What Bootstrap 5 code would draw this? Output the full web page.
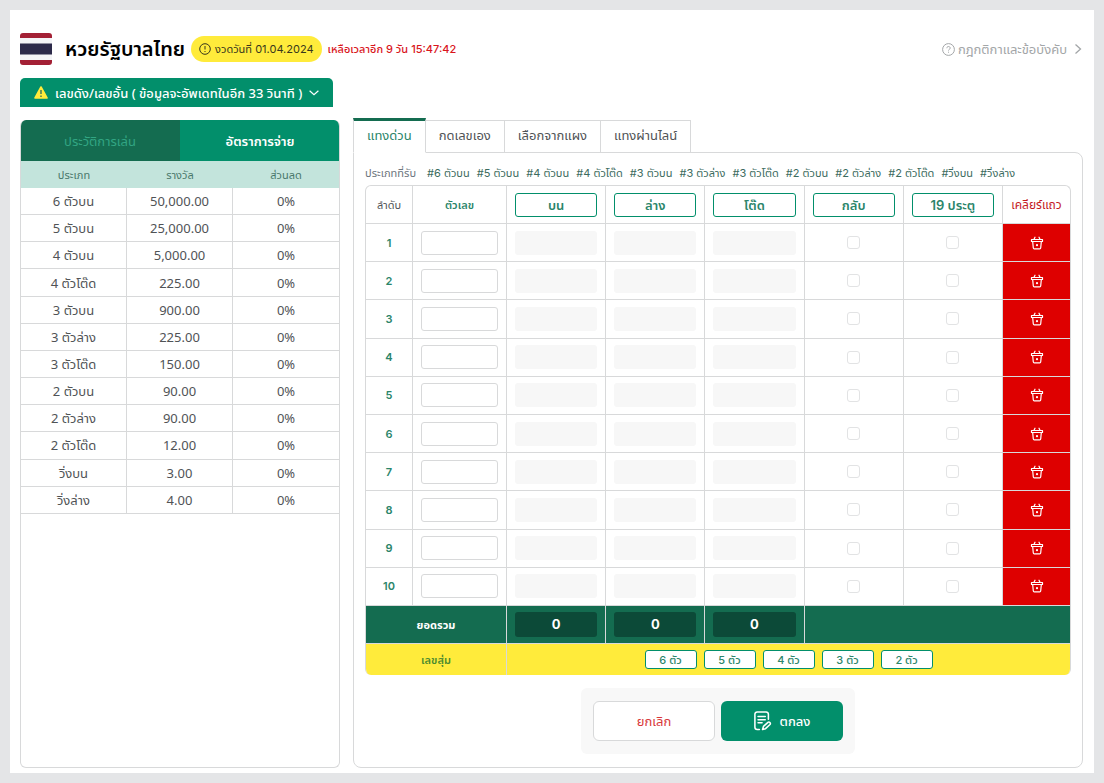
<!DOCTYPE html>
<html lang="th">
<head>
<meta charset="utf-8">
<meta name="viewport" content="width=device-width, initial-scale=1">
<title>หวยรัฐบาลไทย</title>
<link href="https://cdn.jsdelivr.net/npm/bootstrap@5.3.0/dist/css/bootstrap.min.css" rel="stylesheet">
<style>
:root{--green:#028f6b;--deep:#146c50;--text-green:#2b856a;--line:#d8d9da;--yellow:#ffeb3b;--red:#de0000}
body{padding:10px;background:#e4e5e7;font-family:Inter,"Noto Sans Thai","Noto Sans",sans-serif;font-size:13px;line-height:16px;color:#505356}
button,input{font-family:inherit}
button{padding:0;background:none;border:0;color:inherit}
.sheet{min-height:calc(100vh - 20px);padding:23px 12px 5px 10px}
.flag{border-radius:3px}
.page-title{font-size:20px;line-height:30px;font-weight:600;color:#000;margin:0 6px 0 13px}
.round-pill{background:var(--yellow);height:26px;border-radius:13px;padding:0 8px;font-size:11px;color:#38371c;gap:4px}
.time-left{color:#d9161c;font-size:11px;font-weight:500;margin-left:6px}
.rules-link{color:#a3a6a8;gap:3px}
.hot-numbers{background:var(--green);color:#fff;height:29px;border-radius:5px 5px 0 0;padding:0 14px;gap:7px;margin:13px 0 11px;font-family:"Noto Sans","Noto Sans Thai",sans-serif;font-weight:500}
.left-pane{flex:0 0 320px;margin-top:2px;border:1px solid var(--line);border-top:0;border-radius:6px;overflow:hidden}
.right-pane{margin:0 -1px 0 13px}
.left-tabs{margin:0 -1px}
.left-tabs button{flex:1;height:41px;background:var(--deep);color:#32a583}
.left-tabs button.active{background:var(--green);color:#fff;font-weight:600}
.grid-table{width:100%;border-collapse:separate;border-spacing:0;table-layout:fixed;text-align:center}
.grid-table th,.grid-table td{padding:0;border-right:1px solid var(--line);border-bottom:1px solid var(--line);vertical-align:middle}
.grid-table tr>:last-child{border-right:0}
.rates{height:353px;font-family:"Noto Sans","Noto Sans Thai",sans-serif}
.rates tr{height:27px}
.rates th{background:#c3e4dc;border:0;font-size:11px;font-weight:400;color:#49786b}
.bet-tabs{position:relative;align-items:flex-end}
.bet-tabs button{height:33px;padding:0 13px 3px;border:1px solid var(--line);border-left:0;background:#fff}
.bet-tabs button.active{height:35px;border-left:1px solid var(--line);border-top:3px solid var(--deep);border-bottom-color:#fff;color:var(--text-green)}
.bet-pane{border:1px solid var(--line);border-radius:0 8px 8px 8px;padding:12px 11px;margin-top:-1px}
.accepted{gap:7px;font-size:11px;color:#3c6b5e;margin-bottom:4px}
.bet-wrap{border:1px solid var(--line);border-bottom:0;border-radius:6px;overflow:hidden}
.bets{height:489px}
.bets tr{height:38px}
.bets td,.bets th{padding:0 8px}
.bets thead th{font-weight:400;font-size:11px}
.bets thead .col-number{color:var(--text-green);font-weight:600}
.bets thead .col-clear{color:#c41a1e;font-size:12px}
.bets tbody th{color:var(--text-green);font-weight:600;font-size:11px}
.bets thead button{display:block;width:100%;height:24px;border:1px solid var(--green);border-radius:3px;color:var(--text-green);font-size:13px;font-weight:600}
.bets .no-pad{padding:0}
.num,.amount{display:block;width:100%;height:24px;border:1px solid var(--line);border-radius:3px;padding:0 6px;background:#fff}
.amount{border:0;background:#f7f7f7}
.bets .form-check-input{display:block;width:13px;height:13px;margin:0 auto;border-color:#e2e3e4;border-radius:3px}
.bets tbody td:last-child{background:var(--red);padding:0}
.clear-row{display:flex;width:100%;height:37px;align-items:center;justify-content:center;color:#fff}
.bets .sum-row th,.bets .sum-row td{background:var(--deep);color:#fff;font-size:11px;font-weight:700}
.sum-row output{display:block;height:25px;line-height:25px;border-radius:3px;background:#0c4a38;font-size:13px}
.bets .random-row{height:31px}
.bets .random-row th,.bets .random-row td{background:var(--yellow);border-bottom:0;color:#4b8a2f;font-size:11px;font-weight:600}
.random-buttons{gap:7px}
.random-row button{width:52px;height:19px;border:1px solid var(--green);border-radius:3px;background:#fff;color:var(--text-green);font-size:11px;font-weight:500;line-height:16px}
.actions{background:#f8f8f8;border-radius:6px;padding:13px 12px;gap:6px;margin:13px auto 0}
.actions button{width:122px;height:40px;border-radius:6px;background:#fff;border:1px solid var(--line);color:#d8383a}
.actions .confirm{background:var(--green);border:0;color:#fff;font-weight:500;gap:8px}
</style>
</head>
<body>
<svg class="d-none" aria-hidden="true">
  <symbol id="basket" viewBox="0 0 14 14"><path d="M1.500 3.500h11v2h-11zM2.700 5.700l.6 6.300c.1.500.4.800.9.800h5.600c.5 0 .8-.3.900-.8l.6-6.300M5 1.200 4 3.200M9 1.200l1 2" fill="none" stroke="currentColor" stroke-width="1.200" stroke-linecap="round" stroke-linejoin="round"/><circle cx="7" cy="9.200" r="1.100" fill="currentColor"/></symbol>
</svg>
<main class="sheet bg-white d-flex flex-column">
  <header class="d-flex align-items-center">
    <svg class="flag" width="32" height="32" viewBox="0 0 32 32"><path fill="#a32035" d="M0 0h32v32H0z"/><path fill="#f4f4f7" d="M0 5h32v22H0z"/><path fill="#2d2a4a" d="M0 10.500h32v11H0z"/></svg>
    <h1 class="page-title">หวยรัฐบาลไทย</h1>
    <div class="round-pill d-flex align-items-center"><svg width="12" height="12" viewBox="0 0 12 12" fill="none" stroke="currentColor"><circle cx="6" cy="6" r="5.300"/><path d="M6 3v3.500M6 8v1"/></svg>งวดวันที่ 01.04.2024</div>
    <div class="time-left">เหลือเวลาอีก 9 วัน 15:47:42</div>
    <a href="#" class="rules-link ms-auto d-flex align-items-center text-decoration-none"><svg width="13" height="13" viewBox="0 0 13 13" fill="none" stroke="currentColor"><circle cx="6.500" cy="6.500" r="5.900"/><path d="M4.800 5.200c0-2.300 3.500-2.200 3.400 0 0 1.100-1.700 1.200-1.700 2.300M6.500 8.700v1"/></svg>กฎกติกาและข้อบังคับ<svg class="ms-1" width="8" height="12" viewBox="0 0 8 12" fill="none" stroke="currentColor" stroke-width="1.300"><path d="m1.500 1.500 5 4.500-5 4.500"/></svg></a>
  </header>
  <button type="button" class="hot-numbers d-flex align-items-center align-self-start"><svg width="14" height="13" viewBox="0 0 14 13"><path d="M7 1 13 12H1z" fill="#ffeb3b" stroke="#ffeb3b" stroke-width="1.600" stroke-linejoin="round"/><path d="M7 4v4M7 9.500V11" stroke="#39765c" stroke-width="1.400"/></svg>เลขดัง/เลขอั้น ( ข้อมูลจะอัพเดทในอีก 33 วินาที )<svg width="10" height="6" viewBox="0 0 10 6" fill="none" stroke="currentColor" stroke-width="1.200"><path d="m.6.8 4.400 4L9.400.8"/></svg></button>
  <div class="d-flex flex-grow-1">
    <aside class="left-pane">
      <div class="left-tabs d-flex"><button type="button">ประวัติการเล่น</button><button type="button" class="active">อัตราการจ่าย</button></div>
      <table class="grid-table rates">
        <thead><tr><th scope="col">ประเภท</th><th scope="col">รางวัล</th><th scope="col">ส่วนลด</th></tr></thead>
        <tbody>
          <tr><td>6 ตัวบน</td><td>50,000.00</td><td>0%</td></tr>
          <tr><td>5 ตัวบน</td><td>25,000.00</td><td>0%</td></tr>
          <tr><td>4 ตัวบน</td><td>5,000.00</td><td>0%</td></tr>
          <tr><td>4 ตัวโต๊ด</td><td>225.00</td><td>0%</td></tr>
          <tr><td>3 ตัวบน</td><td>900.00</td><td>0%</td></tr>
          <tr><td>3 ตัวล่าง</td><td>225.00</td><td>0%</td></tr>
          <tr><td>3 ตัวโต๊ด</td><td>150.00</td><td>0%</td></tr>
          <tr><td>2 ตัวบน</td><td>90.00</td><td>0%</td></tr>
          <tr><td>2 ตัวล่าง</td><td>90.00</td><td>0%</td></tr>
          <tr><td>2 ตัวโต๊ด</td><td>12.00</td><td>0%</td></tr>
          <tr><td>วิ่งบน</td><td>3.00</td><td>0%</td></tr>
          <tr><td>วิ่งล่าง</td><td>4.00</td><td>0%</td></tr>
        </tbody>
      </table>
    </aside>
    <section class="right-pane flex-grow-1 d-flex flex-column">
      <div class="bet-tabs d-flex"><button type="button" class="active">แทงด่วน</button><button type="button">กดเลขเอง</button><button type="button">เลือกจากแผง</button><button type="button">แทงผ่านไลน์</button></div>
      <div class="bet-pane flex-grow-1 d-flex flex-column">
        <div class="accepted d-flex"><span class="text-secondary me-1">ประเภทที่รับ</span><span>#6 ตัวบน</span><span>#5 ตัวบน</span><span>#4 ตัวบน</span><span>#4 ตัวโต๊ด</span><span>#3 ตัวบน</span><span>#3 ตัวล่าง</span><span>#3 ตัวโต๊ด</span><span>#2 ตัวบน</span><span>#2 ตัวล่าง</span><span>#2 ตัวโต๊ด</span><span>#วิ่งบน</span><span>#วิ่งล่าง</span></div>
        <div class="bet-wrap">
          <table class="grid-table bets">
            <colgroup><col style="width:47px"><col style="width:94px"><col><col><col><col><col><col style="width:67px"></colgroup>
            <thead><tr><th scope="col" class="no-pad">ลำดับ</th><th scope="col" class="col-number">ตัวเลข</th><th scope="col"><button type="button">บน</button></th><th scope="col"><button type="button">ล่าง</button></th><th scope="col"><button type="button">โต๊ด</button></th><th scope="col"><button type="button">กลับ</button></th><th scope="col"><button type="button">19 ประตู</button></th><th scope="col" class="no-pad col-clear">เคลียร์แถว</th></tr></thead>
            <tbody id="bet-rows"></tbody>
            <tfoot>
              <tr class="sum-row"><th scope="row" colspan="2">ยอดรวม</th><td><output>0</output></td><td><output>0</output></td><td><output>0</output></td><td colspan="3"></td></tr>
              <tr class="random-row"><th scope="row" colspan="2">เลขสุ่ม</th><td colspan="6"><div class="random-buttons d-flex justify-content-center"><button type="button">6 ตัว</button><button type="button">5 ตัว</button><button type="button">4 ตัว</button><button type="button">3 ตัว</button><button type="button">2 ตัว</button></div></td></tr>
            </tfoot>
          </table>
        </div>
        <div class="actions d-flex"><button type="button">ยกเลิก</button><button type="button" class="confirm d-flex align-items-center justify-content-center"><svg width="18" height="20" viewBox="0 0 20 22" fill="none" stroke="currentColor" stroke-width="1.700" stroke-linecap="round" stroke-linejoin="round"><path d="M16 9V3.500A2.500 2.500 0 0 0 13.500 1h-10A2.500 2.500 0 0 0 1 3.500V18a2.500 2.500 0 0 0 2.500 2.500H6M4.500 6h8M4.500 9.500h8M4.500 13H9M9.500 20.500l1-3.500 5-4.500c1.500-1 3.500.8 2.300 2.400l-5 4.600z"/></svg>ตกลง</button></div>
      </div>
    </section>
  </div>
</main>
<template id="bet-row"><tr><th scope="row"></th><td><input type="text" class="num"></td><td><input type="text" class="amount" disabled aria-label="บน"></td><td><input type="text" class="amount" disabled aria-label="ล่าง"></td><td><input type="text" class="amount" disabled aria-label="โต๊ด"></td><td><input type="checkbox" class="form-check-input" aria-label="กลับ"></td><td><input type="checkbox" class="form-check-input" aria-label="19 ประตู"></td><td><button type="button" class="clear-row" aria-label="เคลียร์แถว"><svg width="14" height="14"><use href="#basket"/></svg></button></td></tr></template>
<script src="https://cdn.jsdelivr.net/npm/bootstrap@5.3.0/dist/js/bootstrap.bundle.min.js"></script>
<script>
const rowTemplate = document.getElementById('bet-row');
for (let n = 1; n <= 10; n++) {
  const row = rowTemplate.content.cloneNode(true);
  row.querySelector('th').textContent = n;
  row.querySelector('.num').setAttribute('aria-label', 'ตัวเลข ' + n);
  document.getElementById('bet-rows').append(row);
}
</script>
</body>
</html>
